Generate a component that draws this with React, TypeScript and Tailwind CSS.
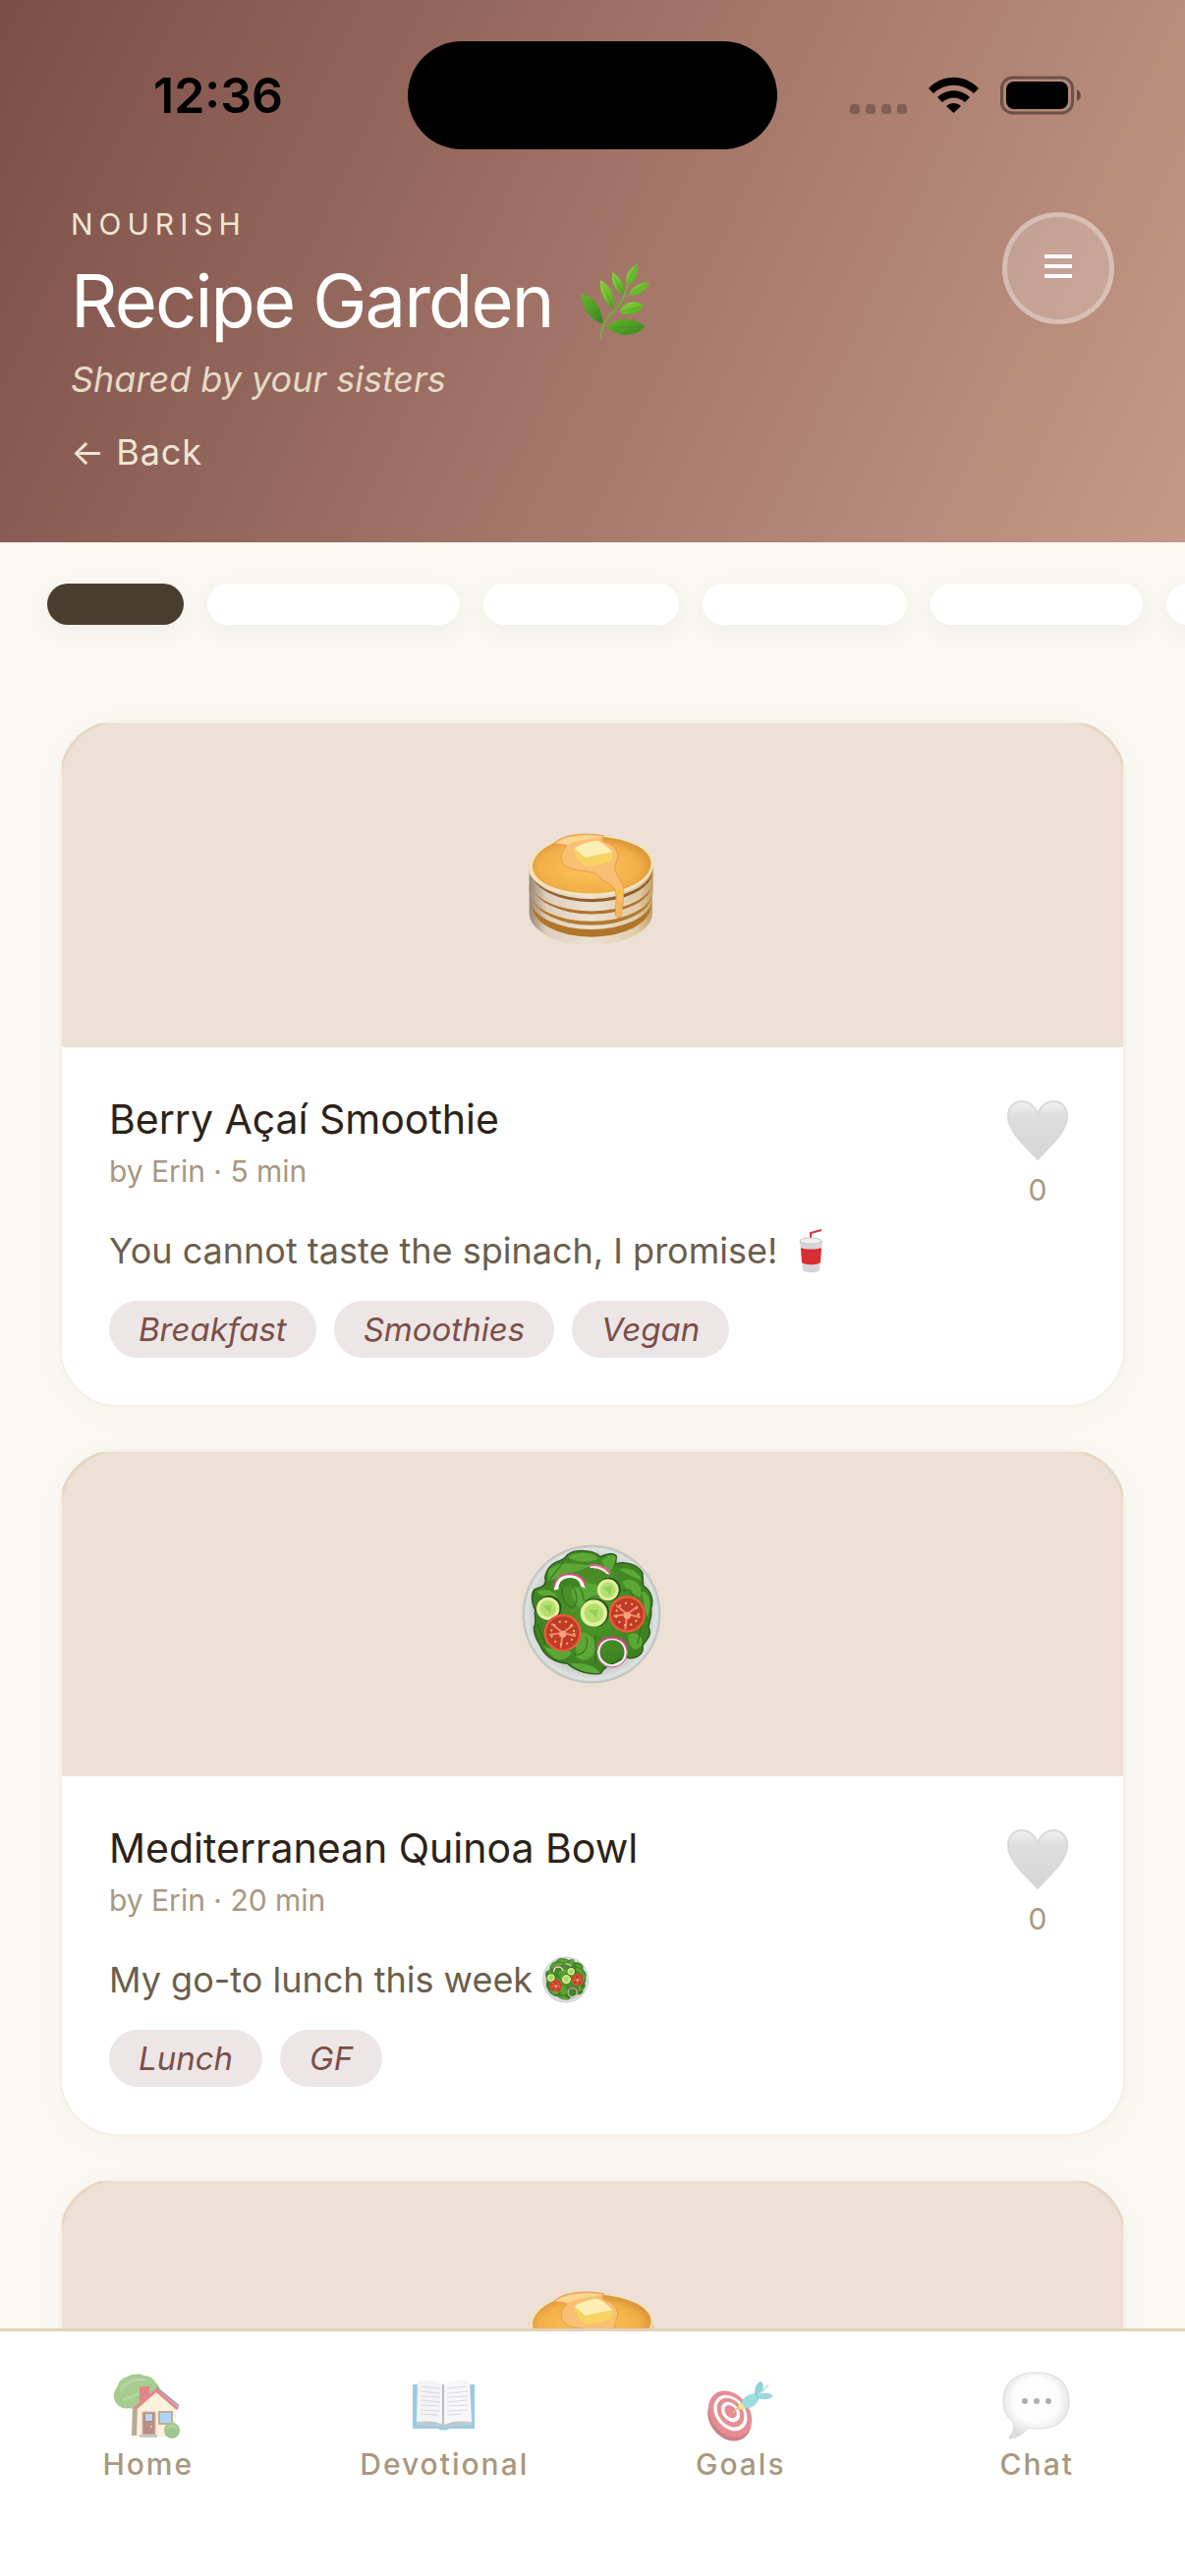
import React from "react";

type Drawing = { className?: string };

function LeafSprig({ className }: Drawing) {
  return (
    <svg viewBox="0 0 288 288" className={className} role="img" aria-label="Herb">
      <defs>
        <linearGradient id="leafLight" x1="0" y1="0" x2="1" y2="1">
          <stop offset="0" stopColor="#8fd93c" />
          <stop offset="1" stopColor="#4fa025" />
        </linearGradient>
        <linearGradient id="leafDark" x1="0" y1="0" x2="1" y2="1">
          <stop offset="0" stopColor="#66b52c" />
          <stop offset="1" stopColor="#3a8620" />
        </linearGradient>
      </defs>
      <path d="M38 122C70 132 98 150 104 214C70 208 40 172 38 122Z" fill="url(#leafDark)" />
      <path d="M96 82C128 98 146 128 136 170C112 152 92 124 96 82Z" fill="url(#leafLight)" />
      <path d="M133 58C158 74 172 94 166 126C144 116 126 92 133 58Z" fill="url(#leafLight)" />
      <path d="M209 32C214 66 202 90 178 97C168 70 182 44 209 32Z" fill="url(#leafLight)" />
      <path d="M246 88C236 118 208 134 182 127C190 102 214 88 246 88Z" fill="url(#leafLight)" />
      <path d="M228 160C214 190 178 194 153 178C170 148 202 138 228 160Z" fill="url(#leafLight)" />
      <path d="M232 223C206 256 150 258 116 224C144 194 198 192 232 223Z" fill="url(#leafDark)" />
      <path d="M178 98C172 132 158 154 132 182C110 206 98 226 97 258" fill="none" stroke="#6fae3a" strokeWidth="6" strokeLinecap="round" />
      <g fill="none" stroke="#3a7d1e" strokeWidth="2" opacity="0.45">
        <path d="M44 130C68 160 88 184 102 210" />
        <path d="M100 90C114 120 126 146 135 168" />
        <path d="M136 66C146 88 156 108 165 124" />
        <path d="M206 38C194 60 184 78 178 94" />
        <path d="M240 92C218 104 200 116 184 126" />
        <path d="M222 162C198 168 176 174 156 178" />
        <path d="M226 223C190 226 150 226 120 224" />
      </g>
    </svg>
  );
}

function Pancakes({ className }: Drawing) {
  return (
    <svg viewBox="153 87 432 432" className={className} role="img" aria-label="Pancakes">
      <defs>
        <radialGradient id="pancakeTop" cx="0.48" cy="0.55" r="0.6">
          <stop offset="0" stopColor="#fcc45a" />
          <stop offset="0.7" stopColor="#f3b048" />
          <stop offset="1" stopColor="#cf8a30" />
        </radialGradient>
        <linearGradient id="pancakeSide" x1="0" y1="0" x2="1" y2="0">
          <stop offset="0" stopColor="#9c8672" />
          <stop offset="0.14" stopColor="#ddcfbc" />
          <stop offset="0.5" stopColor="#ece2d4" />
          <stop offset="0.88" stopColor="#e0cba8" />
          <stop offset="1" stopColor="#c59f68" />
        </linearGradient>
      </defs>
      <path d="M176 300V388A188 98 0 0 0 552 388V300Z" fill="url(#pancakeSide)" />
      <path d="M184 300V364A180 96 0 0 0 548 364V300Z" fill="#b0752b" />
      <path d="M178 300V352A188 96 0 0 0 552 352V300Z" fill="url(#pancakeSide)" />
      <path d="M184 280V330A180 94 0 0 0 550 330V280Z" fill="#b57a2c" />
      <path d="M176 280V318A188 95 0 0 0 554 318V280Z" fill="url(#pancakeSide)" />
      <path d="M184 260V298A180 92 0 0 0 550 298V260Z" fill="#b0742a" />
      <path d="M176 250V286A188 96 0 0 0 554 286V250Z" fill="url(#pancakeSide)" />
      <path d="M182 240V260A182 93 0 0 0 552 260V240Z" fill="#93602c" />
      <path d="M174 240V250A190 97 0 0 0 554 246V236Z" fill="url(#pancakeSide)" />
      <path d="M174 250C176 192 262 150 366 150C474 152 554 184 555 236C556 292 474 338 364 337C258 335 173 300 174 250Z" fill="#f3e3c0" />
      <path d="M186 240C196 190 266 156 366 154C470 156 546 190 548 236C546 288 470 328 366 328C262 328 180 292 186 240Z" fill="url(#pancakeTop)" />
      <path d="M250 176C280 146 350 142 404 152C402 160 396 164 404 170C430 178 448 196 446 216C444 236 432 240 440 262C450 286 466 300 464 322C464 350 460 372 458 396C454 404 442 404 440 394C438 360 446 340 438 318C424 292 398 292 384 272C366 256 330 264 296 250C262 234 272 200 290 184C280 176 262 180 250 176Z" fill="#f9bf72" stroke="#e99a55" strokeWidth="3" />
      <path d="M258 174C290 152 350 148 400 154C380 164 320 162 296 180C286 176 270 176 258 174Z" fill="#fcd58e" />
      <path d="M442 318C444 314 462 314 464 320L460 338L444 336Z" fill="#f8c341" />
      <path d="M444 352L460 350L458 396C452 402 442 400 442 392Z" fill="#f0b955" />
      <path d="M314 190C336 176 366 166 386 168C404 176 420 190 430 200L430 224C420 236 380 242 350 246C334 236 320 220 314 206Z" fill="#f7d363" />
      <path d="M314 190C336 176 366 166 386 168C404 176 420 190 430 202C400 208 370 212 348 220C336 208 322 198 314 190Z" fill="#fdeeb4" />
    </svg>
  );
}

function Salad({ className }: Drawing) {
  return (
    <svg viewBox="123 93 432 432" className={className} role="img" aria-label="Green salad">
      <defs>
        <radialGradient id="plate" cx="0.5" cy="0.5" r="0.5">
          <stop offset="0.8" stopColor="#c3c9c7" />
          <stop offset="0.95" stopColor="#dfe3e2" />
          <stop offset="1" stopColor="#b4bab9" />
        </radialGradient>
        <radialGradient id="greens" cx="0.5" cy="0.45" r="0.6">
          <stop offset="0" stopColor="#4f9a2c" />
          <stop offset="1" stopColor="#3d7c20" />
        </radialGradient>
      </defs>
      <circle cx="336" cy="309" r="211" fill="url(#plate)" />
      <path d="M262 128C290 106 350 116 362 134C380 124 404 120 412 132L410 156C440 144 480 160 492 184L494 222C516 236 528 264 518 290C522 320 512 330 510 350C524 372 500 392 492 404C500 436 462 450 440 440C410 460 380 462 364 490C330 496 290 484 262 460C230 458 196 440 184 414C176 396 160 380 160 350C170 330 160 316 164 296C150 270 152 240 164 232C186 226 200 222 194 196C200 166 220 150 240 146C250 140 256 140 262 128Z" fill="url(#greens)" stroke="#2c5a1c" strokeWidth="4" />
      <g fill="#5ba836">
        <path d="M264 134C290 114 344 120 358 138C330 156 284 150 264 134Z" />
        <path d="M366 146C384 128 404 124 410 136C408 160 396 176 388 184Z" />
        <path d="M204 176C226 152 270 148 330 162C300 180 236 190 204 212Z" />
        <path d="M420 172C450 160 486 182 488 208C470 196 444 190 420 172Z" />
        <path d="M168 240C190 230 220 232 234 260C214 262 190 258 168 240Z" />
        <path d="M430 210C470 190 496 226 484 258C462 244 440 236 430 210Z" />
        <path d="M278 222C300 212 356 206 380 240C390 276 340 262 300 290C284 272 268 250 278 222Z" />
        <path d="M286 376C310 350 342 376 350 404C346 440 320 462 290 440Z" />
        <path d="M448 372C480 356 496 384 488 404C470 430 448 412 448 372Z" />
        <path d="M190 404C220 424 256 414 276 424C260 456 220 462 190 404Z" />
        <path d="M270 460C300 456 346 462 362 488C330 492 296 484 270 460Z" />
        <path d="M486 240C514 240 520 272 508 318C496 300 500 270 486 240Z" />
      </g>
      <g fill="none" stroke="#2f6a1a" strokeWidth="4" opacity="0.7">
        <path d="M240 200C250 240 240 270 270 286C290 300 300 250 276 222" />
        <path d="M300 230C320 250 300 280 330 262C360 240 370 270 390 262" />
        <path d="M320 380C330 410 310 440 280 430M350 376C340 400 356 430 346 460" />
        <path d="M430 236C446 240 452 220 462 254M484 300C500 320 484 350 478 400" />
        <path d="M170 340C180 370 190 380 194 400M250 150C230 180 210 190 204 220" />
      </g>
      <path d="M222 236C222 200 242 188 268 188C294 188 316 204 316 230L302 222C300 206 286 198 268 199C246 200 234 214 236 232Z" fill="#fff" />
      <path d="M236 232C236 214 248 200 268 199C286 198 300 206 302 224C290 234 280 216 262 220C250 224 246 234 236 232Z" fill="#3f8322" />
      <path d="M222 226C226 200 244 187 268 187C294 187 314 200 316 220" fill="none" stroke="#dc4f7c" strokeWidth="6" />
      <path d="M326 162C350 154 380 164 394 188L382 186C370 174 352 168 334 168Z" fill="#f9e3ea" />
      <path d="M328 161C354 154 382 166 393 186" fill="none" stroke="#e0608b" strokeWidth="6" />
      {[
        [386, 235, 35],
        [203, 292, 37],
        [343, 306, 43],
      ].map(([x, y, r]) => (
        <g key={x}>
          <circle cx={x + 3} cy={y - 2} r={r + 1} fill="#24511a" />
          <circle cx={x} cy={y} r={r - 2} fill="#e2f09c" />
          <circle cx={x} cy={y} r={r * 0.68} fill="#b4e06c" />
          <path d={`M${x - 15} ${y - 8}L${x + 12} ${y - 12}L${x + 8} ${y + 16}Z`} fill="#93d060" />
        </g>
      ))}
      {[
        [248, 366, 57],
        [445, 309, 56],
      ].map(([x, y, r]) => (
        <g key={x}>
          <circle cx={x} cy={y} r={r} fill="#ee5a3c" />
          <circle cx={x} cy={y} r={r - 7} fill="#bf3a2a" />
          <path d={`M${x} ${y}L${x - 34} ${y - 28}M${x} ${y}L${x + 32} ${y - 24}M${x} ${y}L${x + 40} ${y + 10}M${x} ${y}L${x - 6} ${y + 46}M${x} ${y}L${x - 42} ${y + 6}`} stroke="#f08a66" strokeWidth="6" />
          <circle cx={x} cy={y + 4} r="11" fill="#f7a07c" />
          <circle cx={x} cy={y} r={r - 22} fill="none" stroke="#f0c24a" strokeWidth="6" strokeDasharray="6 13" />
        </g>
      ))}
      <circle cx="399" cy="425" r="42" fill="none" stroke="#f4efef" strokeWidth="9" />
      <circle cx="399" cy="425" r="46" fill="none" stroke="#c0508a" strokeWidth="3" />
      <path d="M354 408C364 384 386 380 400 380C420 380 440 392 444 410" fill="none" stroke="#c9457c" strokeWidth="7" />
    </svg>
  );
}

function CupWithStraw({ className }: Drawing) {
  return (
    <svg viewBox="0 0 48 48" className={className} role="img" aria-label="Cup with straw">
      <path d="M35 3L24 6V14" fill="none" stroke="#d8323a" strokeWidth="2" strokeLinejoin="round" />
      <path d="M13 14L16 44C18 47 31 47 33 44L36 14Z" fill="#d6d6d8" />
      <path d="M14 21L15 36C19 39 30 39 34 36L35 21C30 23 19 23 14 21Z" fill="#d92f34" />
      <ellipse cx="24" cy="14" rx="11" ry="3" fill="#f1f1f2" stroke="#c9c9cc" strokeWidth="1" />
    </svg>
  );
}

function Heart({ className }: Drawing) {
  return (
    <svg viewBox="0 0 62 62" className={className} aria-hidden="true">
      <defs>
        <linearGradient id="heartFill" x1="0" y1="0" x2="0" y2="1">
          <stop offset="0" stopColor="#f3f3f3" />
          <stop offset="0.25" stopColor="#dedede" />
          <stop offset="1" stopColor="#d6d6d6" />
        </linearGradient>
      </defs>
      <path d="M31 13C27 5 21 1 15 1C7 1 1 7 1 16C1 32 18 46 31 60C44 46 61 32 61 16C61 7 55 1 47 1C41 1 35 5 31 13Z" fill="url(#heartFill)" stroke="#d9d9d9" strokeWidth="2" />
    </svg>
  );
}

function HouseWithGarden({ className }: Drawing) {
  return (
    <svg viewBox="0 0 72 72" className={className} aria-hidden="true">
      <path d="M20 32H27L26 65H19Z" fill="#8d7350" />
      <path d="M1 26C0 20 4 17 5 14C6 8 12 6 15 5C20 2 27 2 31 4C38 4 42 8 44 12C49 15 49 24 46 28C44 34 38 36 33 36C28 39 20 39 17 37C9 39 2 34 1 26Z" fill="#6cab48" />
      <path d="M8 20C12 10 24 6 34 9M10 29C16 24 20 28 26 22" fill="none" stroke="#82bd5e" strokeWidth="3" />
      <path d="M27 15H37V26L27 34Z" fill="#c8393c" />
      <path d="M25 34L44 18L64 34V66H24Z" fill="#fbe8c4" />
      <path d="M25 44H64M25 54H64" stroke="#f3deb6" strokeWidth="1" />
      <path d="M44 16L67 35" fill="none" stroke="#5d6274" strokeWidth="2" />
      <path d="M22 38L44 19L66 38" fill="none" stroke="#d9353b" strokeWidth="3" />
      <path d="M30 41H43V64H30Z" fill="#8c4434" stroke="#b98a68" strokeWidth="1" />
      <path d="M33 43H40V50H33Z" fill="#7fbdf0" />
      <circle cx="39" cy="56" r="1" fill="#f1c04a" />
      <path d="M47 41H60V53H47Z" fill="#7ab8f2" stroke="#9a7a5c" strokeWidth="2" />
      <path d="M27 64H45V67H27Z" fill="#a8a19a" />
      <circle cx="60" cy="60" r="8" fill="#62a043" />
      <path d="M55 58C58 54 63 54 65 58" fill="none" stroke="#84bb62" strokeWidth="2" />
    </svg>
  );
}

function OpenBook({ className }: Drawing) {
  return (
    <svg viewBox="0 0 72 72" className={className} aria-hidden="true">
      <path d="M4 13H67V58H41C40 60 31 60 30 58H4Z" fill="#5aa7cf" />
      <path d="M8 50L35 54L64 50V54L36 56L8 54Z" fill="#a5a5a8" />
      <path d="M9 10C18 8 28 9 35 13V54C27 50 17 50 8 51Z" fill="#ededf1" />
      <path d="M62 10C53 8 43 9 36 13V54C44 50 54 50 64 51Z" fill="#f3f3f7" />
      <path d="M35 13V54" stroke="#8f8f96" strokeWidth="2" />
      <g stroke="#c2c2c8" strokeWidth="1">
        <path d="M12 15L32 17M12 20L32 22M12 25L32 26M12 29L32 31M12 34L32 35M12 39L32 40M12 43L30 44" />
        <path d="M39 17L59 15M39 22L60 20M39 26L60 25M39 31L60 29M39 35L60 34M39 40L60 39M39 44L54 43" />
      </g>
    </svg>
  );
}

function Dartboard({ className }: Drawing) {
  return (
    <svg viewBox="54 27 216 216" className={className} aria-hidden="true">
      <g transform="rotate(-38 128 160)">
        <ellipse cx="122" cy="166" rx="60" ry="76" fill="#a82f36" />
        <ellipse cx="131" cy="158" rx="59" ry="77" fill="#d8434b" />
        <ellipse cx="134" cy="156" rx="45" ry="60" fill="#fff" />
        <ellipse cx="135" cy="155" rx="36" ry="49" fill="#d8434b" />
        <ellipse cx="136" cy="154" rx="25" ry="34" fill="#fff" />
        <ellipse cx="137" cy="153" rx="16" ry="22" fill="#d8434b" />
      </g>
      <path d="M137 153L158 132" stroke="#c9a83a" strokeWidth="4" />
      <path d="M154 126L164 122L176 136L170 142L156 142Z" fill="#ecd04a" />
      <path d="M164 122C170 102 190 94 214 92L220 102C214 126 196 142 176 138Z" fill="#62c4cf" />
      <path d="M204 100C202 76 212 58 224 57C234 66 232 84 218 102Z" fill="#4bb3bf" />
      <path d="M210 104C222 90 246 88 260 100C256 112 234 114 210 108Z" fill="#58bfcb" />
      <path d="M216 98L246 68" stroke="#86d2da" strokeWidth="6" />
    </svg>
  );
}

function SpeechBalloon({ className }: Drawing) {
  return (
    <svg viewBox="0 0 72 72" className={className} aria-hidden="true">
      <defs>
        <radialGradient id="balloon" cx="0.5" cy="0.42" r="0.58">
          <stop offset="0.6" stopColor="#fcfcfc" />
          <stop offset="1" stopColor="#c6c6c8" />
        </radialGradient>
      </defs>
      <path d="M36 1C56 1 69 11 69 30C69 49 57 58 38 58C34 58 30 58 27 57C22 64 15 68 9 68C7 68 8 66 9 65C13 61 13 56 12 51C5 46 2 39 2 30C2 11 15 1 36 1Z" fill="url(#balloon)" stroke="#c4c4c6" strokeWidth="1" />
      <g fill="#77777a">
        <circle cx="24" cy="30" r="3" />
        <circle cx="36" cy="30" r="3" />
        <circle cx="48" cy="30" r="3" />
      </g>
    </svg>
  );
}

function StatusBar() {
  return (
    <div className="grid grid-cols-3 items-center pt-[42px]">
      <p className="pl-[42px] text-center text-[50px] leading-[60px] font-semibold text-black">12:36</p>
      <div className="h-[110px] w-[376px] justify-self-center rounded-full bg-black" />
      <div className="flex items-center justify-end gap-[22px] pr-[105px]">
        <svg viewBox="0 0 58 40" className="h-[40px] w-[58px] text-black/25" fill="currentColor" aria-hidden="true">
          <rect x="0" y="29" width="10" height="10" rx="3" />
          <rect x="16" y="29" width="10" height="10" rx="3" />
          <rect x="32" y="29" width="10" height="10" rx="3" />
          <rect x="48" y="29" width="10" height="10" rx="3" />
        </svg>
        <svg viewBox="0 0 51 40" className="h-[40px] w-[51px]" role="img" aria-label="Wi-Fi">
          <path d="M0 13C14 -2 37 -2 51 13L46 18C34 7 17 7 5 18Z" />
          <path d="M9 22C18 13 33 13 42 22L37 27C30 21 21 21 14 27Z" />
          <path d="M18 31C22 27 29 27 33 31L25.500 38Z" />
        </svg>
        <svg viewBox="0 0 83 40" className="h-[40px] w-[83px]" role="img" aria-label="Battery full">
          <rect x="1.500" y="2" width="72" height="36" rx="11" fill="none" stroke="#000" strokeOpacity="0.4" strokeWidth="3" />
          <rect x="6" y="6" width="63" height="28" rx="8" />
          <path d="M78 14C83 16 83 24 78 26Z" opacity="0.45" />
        </svg>
      </div>
    </div>
  );
}

function Header() {
  return (
    <header className="shrink-0 bg-[linear-gradient(115deg,#7b4f48_0%,#a27467_50%,#c49a87_100%)] pb-[70px]">
      <StatusBar />
      <div className="flex items-start justify-between px-[72px] pt-[58px]">
        <div>
          <p className="text-[30px] leading-[36px] tracking-[6px] text-[#f0e6d4]">NOURISH</p>
          <div className="mt-[12px] flex items-center gap-[16px]">
            <h1 className="text-[74px] leading-[92px] tracking-tight text-white">Recipe Garden</h1>
            <LeafSprig className="size-[96px]" />
          </div>
          <p className="mt-[10px] text-[36px] leading-[44px] text-[#e6dac8] italic">Shared by your sisters</p>
          <button type="button" className="mt-[30px] block text-[36px] leading-[44px] tracking-wide text-[#f0e6d4]">
            ← Back
          </button>
        </div>
        <button
          type="button"
          aria-label="Open menu"
          className="mt-[6px] flex size-[114px] items-center justify-center rounded-full border-[5px] border-white/30 bg-white/20 pb-[4px]"
        >
          <svg viewBox="0 0 28 24" className="h-[24px] w-[28px]" fill="#fff" aria-hidden="true">
            <path d="M0 0H28V4H0ZM0 10H28V14H0ZM0 20H28V24H0Z" />
          </svg>
        </button>
      </div>
    </header>
  );
}

const filters = [
  { label: "All", size: "w-[139px]" },
  { label: "Breakfast", size: "w-[257px]" },
  { label: "Lunch", size: "w-[199px]" },
  { label: "Dinner", size: "w-[208px]" },
  { label: "Snacks", size: "w-[216px]" },
  { label: "Vegan", size: "w-[208px]" },
];

function Filters() {
  return (
    <div className="flex gap-[24px] overflow-hidden px-[48px] pt-[42px] pb-[97px]">
      {filters.map((filter, index) => (
        <button
          key={filter.label}
          type="button"
          aria-label={filter.label}
          aria-pressed={index === 0}
          className={`h-[42px] shrink-0 rounded-full shadow-[0_6px_24px_rgba(60,50,40,0.05)] ${filter.size} ${
            index === 0 ? "bg-[#4a3d2e]" : "bg-white"
          }`}
        />
      ))}
    </div>
  );
}

type Recipe = {
  title: string;
  byline: string;
  note: string;
  tags: string[];
  Picture: React.ComponentType<Drawing>;
  NoteIcon: React.ComponentType<Drawing>;
};

const recipes: Recipe[] = [
  {
    title: "Berry Açaí Smoothie",
    byline: "by Erin · 5 min",
    note: "You cannot taste the spinach, I promise!",
    tags: ["Breakfast", "Smoothies", "Vegan"],
    Picture: Pancakes,
    NoteIcon: CupWithStraw,
  },
  {
    title: "Mediterranean Quinoa Bowl",
    byline: "by Erin · 20 min",
    note: "My go-to lunch this week",
    tags: ["Lunch", "GF"],
    Picture: Salad,
    NoteIcon: Salad,
  },
];

function PictureBand({ Picture }: { Picture: React.ComponentType<Drawing> }) {
  return (
    <div className="flex h-[330px] items-center justify-center bg-[#ede0d4]">
      <Picture className="size-[144px]" />
    </div>
  );
}

function Card({ children }: { children: React.ReactNode }) {
  return (
    <article className="relative shrink-0 overflow-hidden rounded-[60px] bg-white p-[3px] shadow-[0_6px_48px_rgba(60,50,40,0.02)]">
      {children}
      <div className="pointer-events-none absolute inset-0 rounded-[60px] border-[3px] border-[#d4b882]/20" />
    </article>
  );
}

function RecipeCard({ recipe }: { recipe: Recipe }) {
  const { title, byline, note, tags, Picture, NoteIcon } = recipe;
  return (
    <Card>
      <PictureBand Picture={Picture} />
      <div className="flex items-start justify-between p-[48px]">
        <div>
          <h2 className="text-[41px] leading-[50px] text-[#2c2218]">{title}</h2>
          <p className="mt-[10px] text-[30px] leading-[36px] text-[#a89880]">{byline}</p>
          <div className="mt-[36px] flex items-center gap-[10px]">
            <p className="text-[36px] leading-[54px] text-[#6b5e4c]">{note}</p>
            <NoteIcon className="size-[48px]" />
          </div>
          <ul className="mt-[24px] flex gap-[18px]">
            {tags.map((tag) => (
              <li key={tag} className="rounded-full bg-[#ede6e6] px-[30px] text-[33px] leading-[58px] text-[#7b4f47] italic">
                {tag}
              </li>
            ))}
          </ul>
        </div>
        <button type="button" aria-label={`Like ${title}`} className="flex w-[78px] flex-col items-center gap-[11px] pt-[6px]">
          <Heart className="size-[62px]" />
          <span className="text-[30px] leading-[36px] text-[#a89880]">0</span>
        </button>
      </div>
    </Card>
  );
}

const tabs = [
  { label: "Home", Icon: HouseWithGarden },
  { label: "Devotional", Icon: OpenBook },
  { label: "Goals", Icon: Dartboard },
  { label: "Chat", Icon: SpeechBalloon },
];

function TabBar() {
  return (
    <nav className="grid shrink-0 grid-cols-4 border-t-[3px] border-[#e0d2ba] bg-white pt-[41px] pb-[96px]">
      {tabs.map(({ label, Icon }) => (
        <a key={label} href={`#${label.toLowerCase()}`} className="flex flex-col items-center gap-[4px]">
          <Icon className="size-[72px] opacity-60" />
          <span className="text-[30px] leading-[36px] font-medium tracking-[2px] text-[#a89880]">{label}</span>
        </a>
      ))}
    </nav>
  );
}

export default function App() {
  return (
    <div className="flex h-screen flex-col overflow-hidden bg-[#faf8f3] font-['Inter',sans-serif]">
      <Header />
      <main className="min-h-0 flex-1 overflow-hidden">
        <Filters />
        <div className="flex flex-col gap-[42px] px-[60px]">
          {recipes.map((recipe) => (
            <RecipeCard key={recipe.title} recipe={recipe} />
          ))}
          <Card>
            <PictureBand Picture={Pancakes} />
          </Card>
        </div>
      </main>
      <TabBar />
    </div>
  );
}
